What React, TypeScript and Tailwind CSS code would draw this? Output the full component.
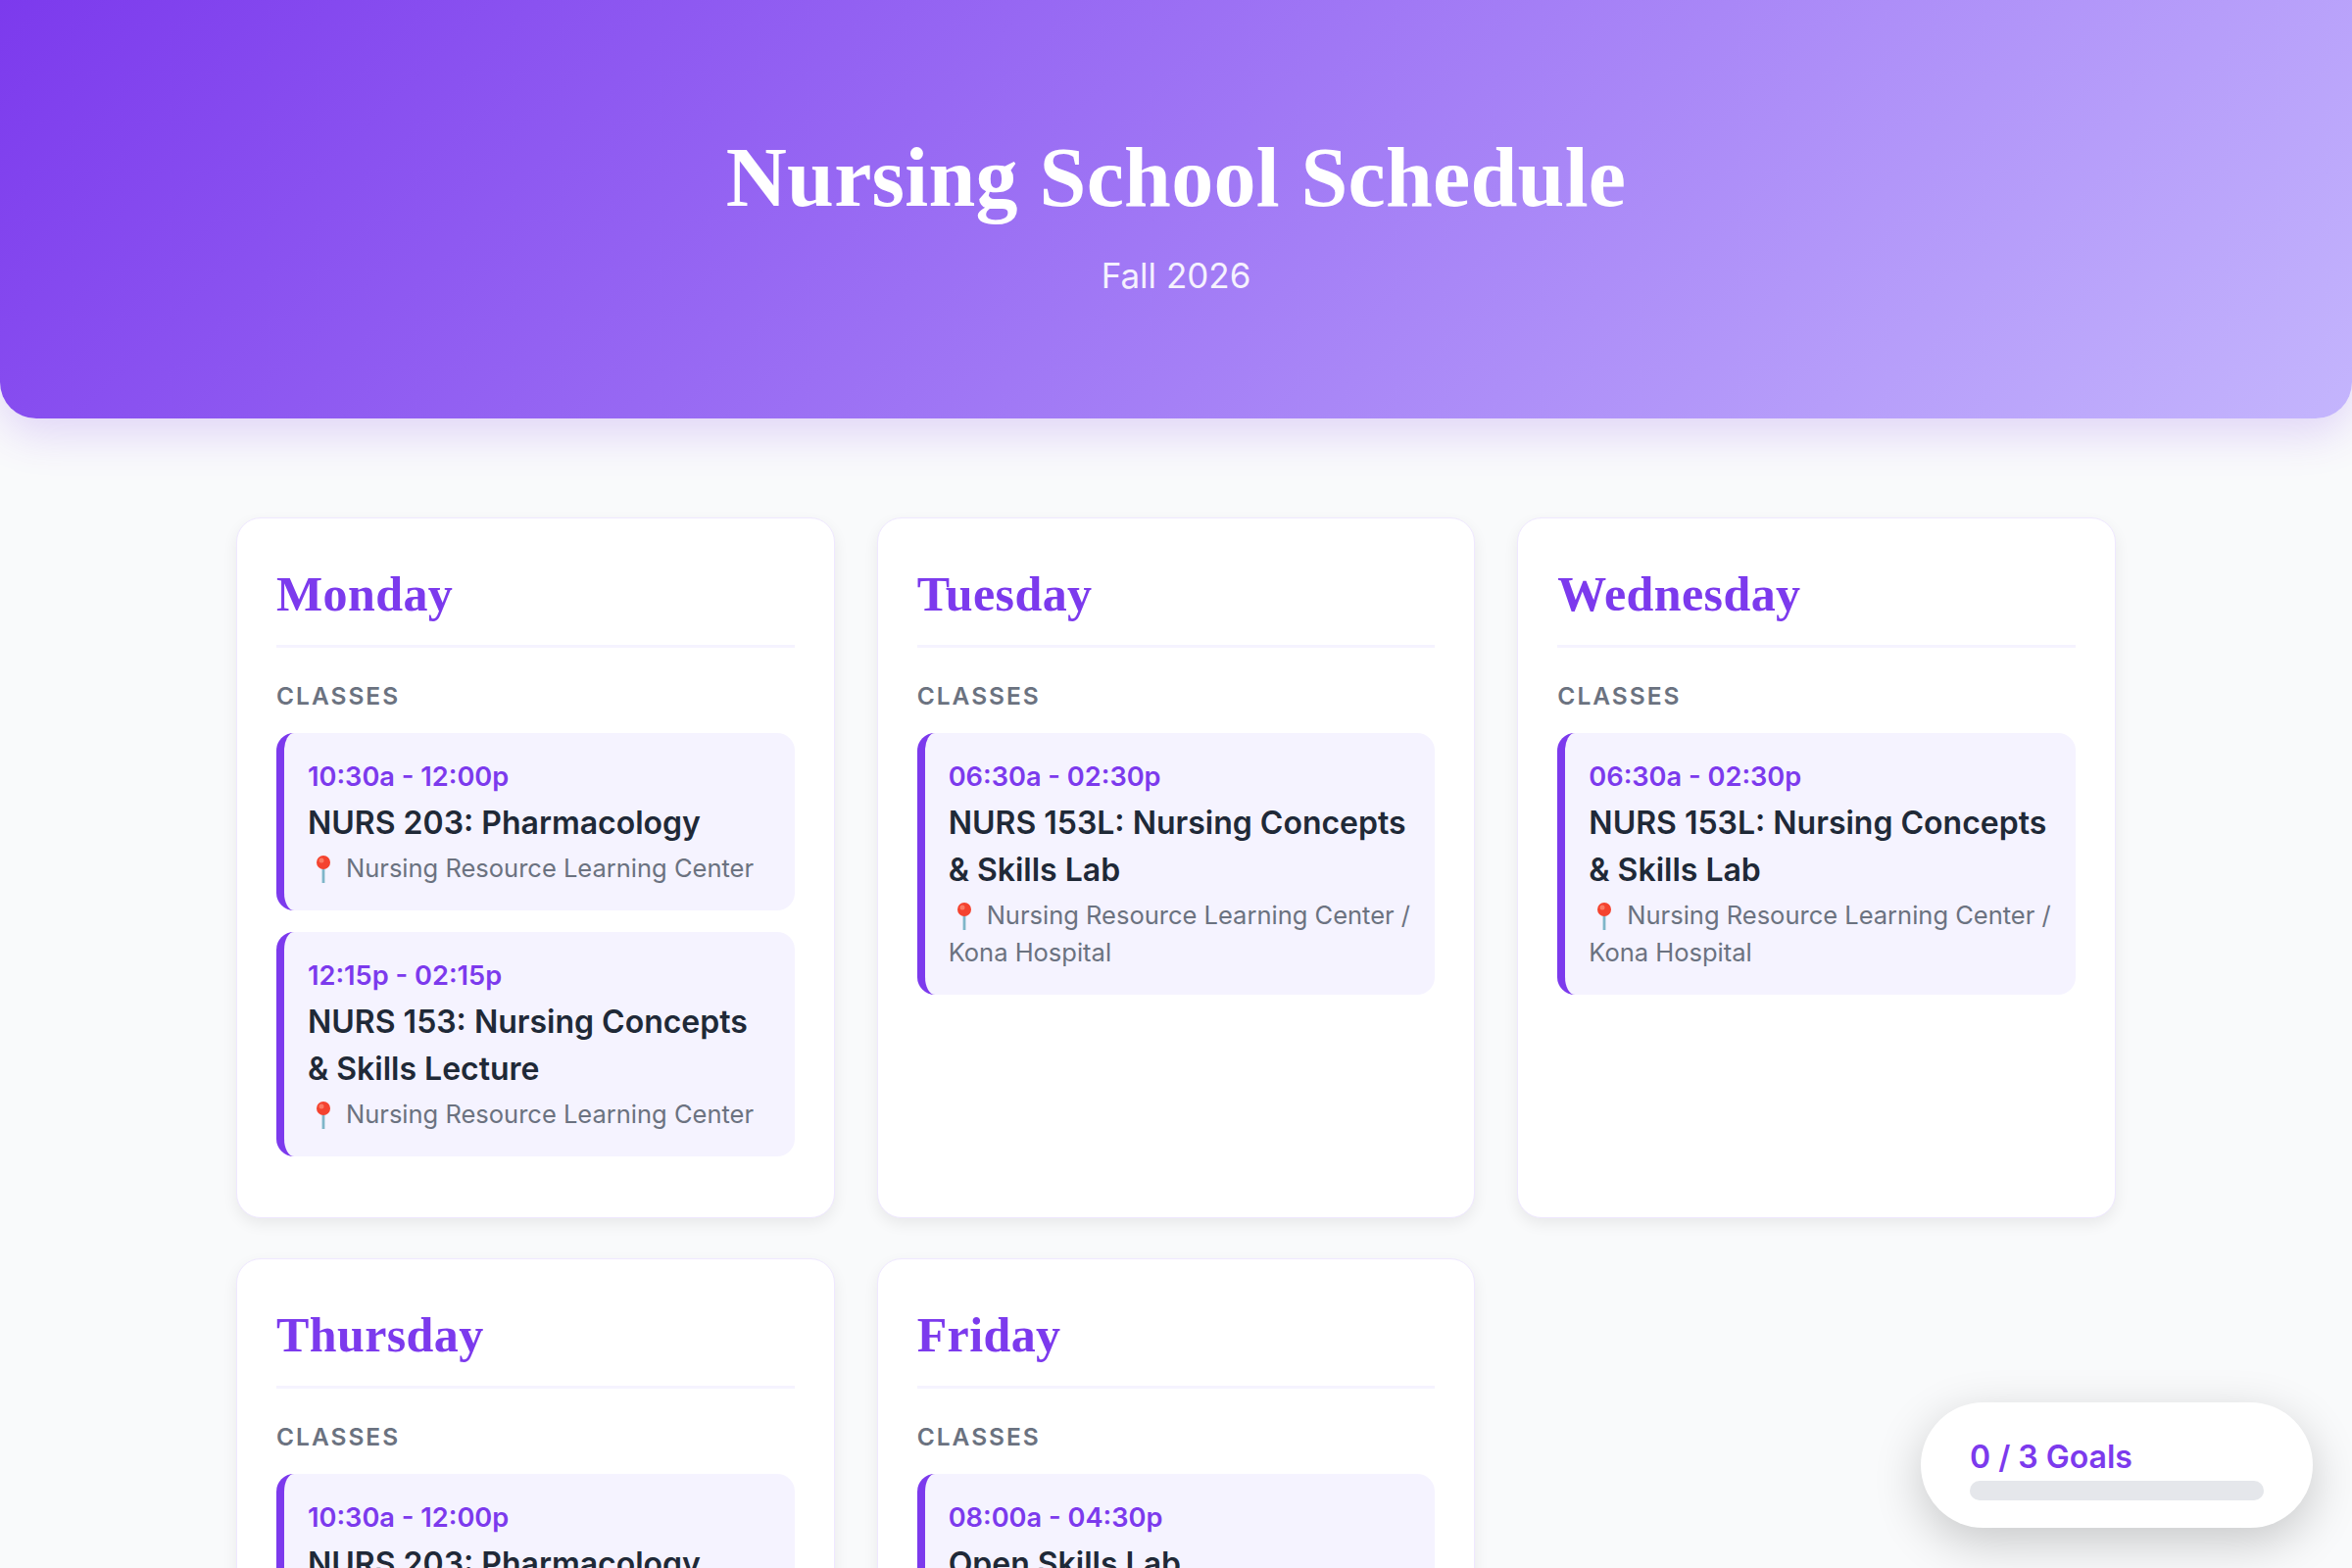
import React from 'react';

interface ClassItem {
  time: string;
  name: string;
  place: string;
}

interface Day {
  day: string;
  classes: ClassItem[];
}

const lab = 'Nursing Resource Learning Center / Kona Hospital';
const center = 'Nursing Resource Learning Center';

const days: Day[] = [
  {
    day: 'Monday',
    classes: [
      { time: '10:30a - 12:00p', name: 'NURS 203: Pharmacology', place: center },
      { time: '12:15p - 02:15p', name: 'NURS 153: Nursing Concepts & Skills Lecture', place: center },
    ],
  },
  {
    day: 'Tuesday',
    classes: [{ time: '06:30a - 02:30p', name: 'NURS 153L: Nursing Concepts & Skills Lab', place: lab }],
  },
  {
    day: 'Wednesday',
    classes: [{ time: '06:30a - 02:30p', name: 'NURS 153L: Nursing Concepts & Skills Lab', place: lab }],
  },
  {
    day: 'Thursday',
    classes: [{ time: '10:30a - 12:00p', name: 'NURS 203: Pharmacology', place: center }],
  },
  {
    day: 'Friday',
    classes: [{ time: '08:00a - 04:30p', name: 'Open Skills Lab', place: center }],
  },
];

const Pin = () => (
  <svg viewBox="0 0 32 30" className="inline-block w-[32px] h-[30px] mr-[7px] align-[-7px]">
    <rect x="14.6" y="12" width="2.8" height="17" fill="#7fb6c9" />
    <circle cx="16" cy="8" r="7" fill="#f4432f" />
    <circle cx="14" cy="6" r="2.5" fill="#fb7a63" />
  </svg>
);

export default function App() {
  return (
    <div className="relative h-screen overflow-hidden bg-[#f9fafb] font-['Inter',sans-serif]">
      <header className="h-[427px] pt-[125px] text-center text-white rounded-b-[37px] bg-[linear-gradient(135deg,#7c3aed,#c4b5fd)] shadow-[0_15px_46px_rgba(124,58,237,0.2)]">
        <h1 className="font-['Liberation_Serif',serif] font-bold text-[86px] leading-[112px] tracking-[0.25px]">
          Nursing School Schedule
        </h1>
        <p className="mt-[19px] text-[35px] leading-[51px] font-normal opacity-90">Fall 2026</p>
      </header>

      <main className="grid grid-cols-3 gap-x-[43px] gap-y-[41px] px-[241px] pt-[101px]">
        {days.map((d) => (
          <section
            key={d.day}
            className="bg-white border-[1.5px] border-[#efe8ff] rounded-[25px] p-[40px] shadow-[0_6px_15px_rgba(0,0,0,0.07)]"
          >
            <h2 className="font-['Liberation_Serif',serif] font-bold text-[50px] leading-[75px] pb-[14px] tracking-[0.4px] text-[#7c3aed] border-b-[3px] border-[#f5f3ff]">
              {d.day}
            </h2>
            <h3 className="mt-[31px] mb-[20px] text-[24.5px] leading-[36px] font-semibold tracking-[2px] uppercase text-[#6b7280]">
              Classes
            </h3>
            {d.classes.map((c) => (
              <div
                key={c.time + c.name}
                className="mb-[22px] pl-[24px] pr-[24px] py-[24px] bg-[#f5f3ff] border-l-[8px] border-[#7c3aed] rounded-[18px]"
              >
                <div className="mb-[3px] text-[27.2px] leading-[41px] font-semibold text-[#7c3aed]">{c.time}</div>
                <div className="text-[32px] leading-[48px] font-semibold text-[#1f2937]">{c.name}</div>
                <div className="mt-[3px] text-[25.5px] leading-[38px] text-[#6b7280]">
                  <Pin />
                  {c.place}
                </div>
              </div>
            ))}
          </section>
        ))}
      </main>

      <div className="absolute right-[40px] bottom-[41px] w-[400px] h-[128px] px-[50px] pt-[32px] bg-white rounded-[64px] shadow-[0_15px_50px_rgba(0,0,0,0.2)]">
        <div className="text-[32px] leading-[48px] font-semibold text-[#7c3aed]">0 / 3 Goals</div>
        <div className="h-[20px] bg-[#e5e7eb] rounded-[10px]" />
      </div>
    </div>
  );
}
